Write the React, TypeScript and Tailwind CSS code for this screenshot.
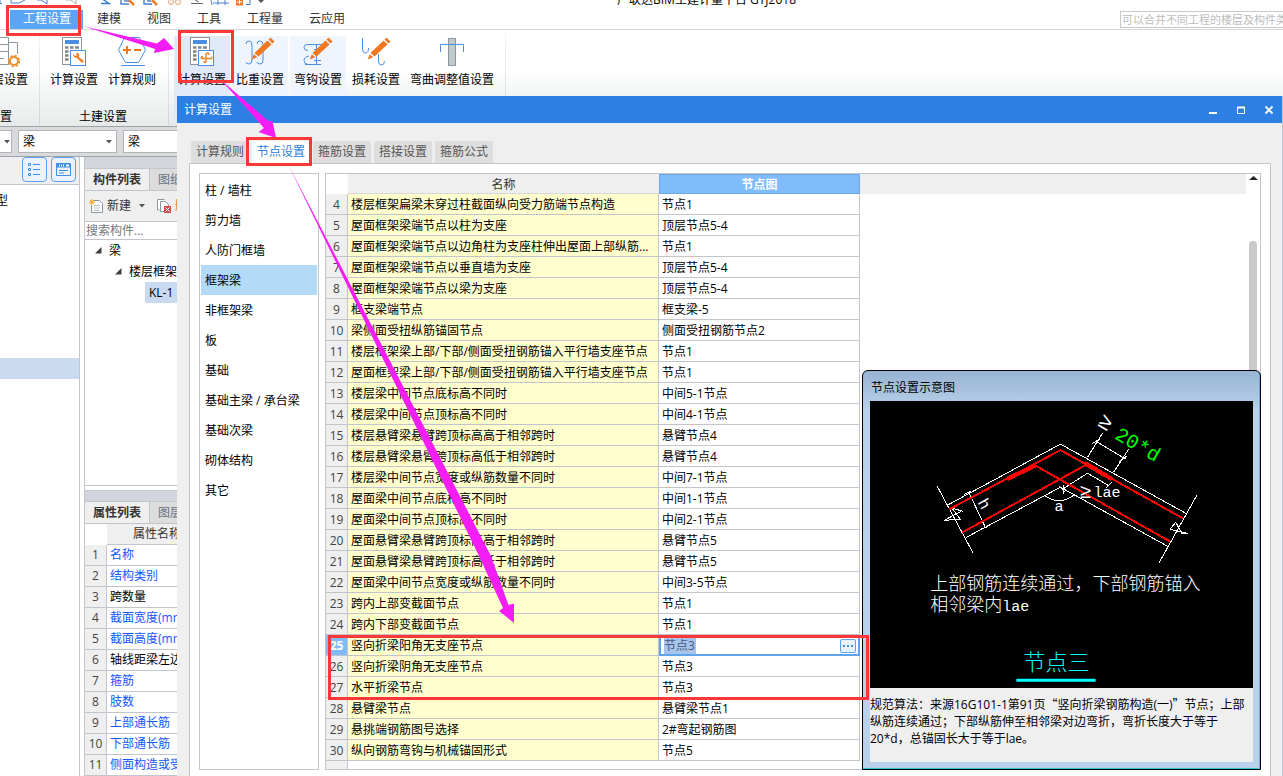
import React from "react";
import clsx from "clsx";

type NodeRow = { id: number; name: string; node: string };

const nodeRows: NodeRow[] = [
	{ id: 4, name: "楼层框架扁梁未穿过柱截面纵向受力筋端节点构造", node: "节点1" },
	{ id: 5, name: "屋面框架梁端节点以柱为支座", node: "顶层节点5-4" },
	{ id: 6, name: "屋面框架梁端节点以边角柱为支座柱伸出屋面上部纵筋...", node: "节点1" },
	{ id: 7, name: "屋面框架梁端节点以垂直墙为支座", node: "顶层节点5-4" },
	{ id: 8, name: "屋面框架梁端节点以梁为支座", node: "顶层节点5-4" },
	{ id: 9, name: "框支梁端节点", node: "框支梁-5" },
	{ id: 10, name: "梁侧面受扭纵筋锚固节点", node: "侧面受扭钢筋节点2" },
	{ id: 11, name: "楼层框架梁上部/下部/侧面受扭钢筋锚入平行墙支座节点", node: "节点1" },
	{ id: 12, name: "屋面框架梁上部/下部/侧面受扭钢筋锚入平行墙支座节点", node: "节点1" },
	{ id: 13, name: "楼层梁中间节点底标高不同时", node: "中间5-1节点" },
	{ id: 14, name: "楼层梁中间节点顶标高不同时", node: "中间4-1节点" },
	{ id: 15, name: "楼层悬臂梁悬臂跨顶标高高于相邻跨时", node: "悬臂节点4" },
	{ id: 16, name: "楼层悬臂梁悬臂跨顶标高低于相邻跨时", node: "悬臂节点4" },
	{ id: 17, name: "楼层梁中间节点宽度或纵筋数量不同时", node: "中间7-1节点" },
	{ id: 18, name: "屋面梁中间节点底标高不同时", node: "中间1-1节点" },
	{ id: 19, name: "屋面梁中间节点顶标高不同时", node: "中间2-1节点" },
	{ id: 20, name: "屋面悬臂梁悬臂跨顶标高高于相邻跨时", node: "悬臂节点5" },
	{ id: 21, name: "屋面悬臂梁悬臂跨顶标高低于相邻跨时", node: "悬臂节点5" },
	{ id: 22, name: "屋面梁中间节点宽度或纵筋数量不同时", node: "中间3-5节点" },
	{ id: 23, name: "跨内上部变截面节点", node: "节点1" },
	{ id: 24, name: "跨内下部变截面节点", node: "节点1" },
	{ id: 25, name: "竖向折梁阳角无支座节点", node: "节点3" },
	{ id: 26, name: "竖向折梁阴角无支座节点", node: "节点3" },
	{ id: 27, name: "水平折梁节点", node: "节点3" },
	{ id: 28, name: "悬臂梁节点", node: "悬臂梁节点1" },
	{ id: 29, name: "悬挑端钢筋图号选择", node: "2#弯起钢筋图" },
	{ id: 30, name: "纵向钢筋弯钩与机械锚固形式", node: "节点5" },
];

const properties = [
	{ name: "名称", blue: true },
	{ name: "结构类别", blue: true },
	{ name: "跨数量", blue: false },
	{ name: "截面宽度(mm)", blue: true },
	{ name: "截面高度(mm)", blue: true },
	{ name: "轴线距梁左边", blue: false },
	{ name: "箍筋", blue: true },
	{ name: "肢数", blue: true },
	{ name: "上部通长筋", blue: true },
	{ name: "下部通长筋", blue: true },
	{ name: "侧面构造或受扭", blue: true },
];

const categories = ["柱 / 墙柱", "剪力墙", "人防门框墙", "框架梁", "非框架梁", "板", "基础", "基础主梁 / 承台梁", "基础次梁", "砌体结构", "其它"];
const menuTabs = ["建模", "视图", "工具", "工程量", "云应用"];
const dialogTabs = ["计算规则", "节点设置", "箍筋设置", "搭接设置", "箍筋公式"];

/* ---------- icons ---------- */

const Calculator = () => (
	<g fill="none">
		<rect x="4.5" y="1.5" width="19" height="27" fill="#fff" stroke="#8a9499" />
		<rect x="7" y="4" width="14" height="4" fill="#4a90e2" />
		<path d="M7 11.500h3.500M12 11.500h3.500M17 11.500h4M7 15.500h3.500M12 15.500h3.500M7 19.500h3.500M7 23.500h3.500" stroke="#7c868c" strokeWidth="2.500" />
		<rect x="12.500" y="14.500" width="15" height="15" fill="#fff" stroke="#4a90e2" />
	</g>
);

const CalcWrenchIcon = () => (
	<svg width="32" height="32" viewBox="0 0 32 32">
		<Calculator />
		<path d="M15 18c0 3 2 4 4 4l5 5 2-2-5-4c1-3-1-5-3-4l1 2-2 1z" fill="#f08228" />
	</svg>
);

const CalcBarIcon = () => (
	<svg width="32" height="32" viewBox="0 0 32 32">
		<Calculator />
		<path d="M20 26.500v-7.500q0-2 1.500-2 1.500 0 1.500 2M15 22.500h10q1 0 1-2M20 26.500q-2 0-2-1.500M15 22.500q0-2 2-2" fill="none" stroke="#f08228" strokeWidth="1.400" />
	</svg>
);

const RuleIcon = () => (
	<svg width="32" height="32" viewBox="0 0 32 32" fill="none">
		<path d="M8.500 1.500h15L29.500 14l-7 12.500h-13L2.500 14z" fill="#fff" stroke="#4a90e2" />
		<path d="M7 14h8M11 10v8M18 14h7" stroke="#f07820" strokeWidth="2" />
		<path d="M5 29.500h24" stroke="#4a90e2" />
	</svg>
);

const Pencil = () => (
	<g>
		<path d="M26.500 1.500l4 4-2 2-4-4z" fill="#f07820" />
		<path d="M23.500 4.500l4 4-13 12-4-3.500z" fill="#f07820" />
		<path d="M9.800 18.200l3.500 3-5.800 2.300z" fill="#f07820" />
	</g>
);

const WeightIcon = () => (
	<svg width="32" height="32" viewBox="0 0 32 32" fill="none">
		<path d="M2 8q0-3 3-3t3 4v15q0 4-3 4t-3-2M13 8q0-3 3-3t3 4v15q0 4-3 4t-3-2" stroke="#4a90e2" />
		<Pencil />
	</svg>
);

const HookIcon = () => (
	<svg width="32" height="32" viewBox="0 0 32 32" fill="none">
		<path d="M20 8.500H5q-3 0-3 3t4 3M3 28.500h16M7 20q-5 1-5 4.500t4 4M14.500 8v20M12 24.500h7M12 13.500h5" stroke="#4a90e2" />
		<Pencil />
	</svg>
);

const LossIcon = () => (
	<svg width="32" height="32" viewBox="0 0 32 32" fill="none">
		<path d="M2.500 2v11q0 4 3 4t3-5M18.500 18v7q0 4 3 4t3-4" stroke="#4a90e2" />
		<Pencil />
	</svg>
);

const BendIcon = () => (
	<svg width="32" height="32" viewBox="0 0 32 32" fill="none">
		<rect x="12.500" y="2.500" width="7" height="27" fill="#c0c8cb" stroke="#8a989e" />
		<path d="M4.500 16V8.500h23V16" stroke="#4a90e2" />
	</svg>
);

const FloorIcon = () => (
	<svg width="32" height="32" viewBox="0 0 32 32" fill="none">
		<path d="M2 1.500h18.500v27H2M2 8.500h18M2 15.500h18M2 22.500h14M20 6.500h9.500V18" stroke="#8a989e" />
		<circle cx="26" cy="25" r="4" fill="#fff" stroke="#ee8f30" strokeWidth="2" />
		<circle cx="26" cy="25" r="5.500" stroke="#ee8f30" strokeWidth="1.500" strokeDasharray="2.300 2" />
	</svg>
);

const Caret = ({ className }: { className?: string }) => (
	<svg width="6" height="4" viewBox="0 0 6 4" className={clsx("shrink-0", className)}>
		<path d="M0 0h6L3 3.500z" fill="#555" />
	</svg>
);

const TreeArrow = () => (
	<svg width="7" height="7" viewBox="0 0 7 7" className="shrink-0">
		<path d="M6.500 0v6.500H0z" fill="#404040" />
	</svg>
);

/* Lower halves of the quick access icons, cut by the window edge */
const QuickIcons = () => (
	<svg width="270" height="8" viewBox="0 0 270 8" fill="none" className="shrink-0" aria-hidden="true">
		<path d="M0 0v3.500h2M11 0v3h8l6-3M37 0h4l6 4V0M211 0l1 5M213 3h16M218 0v5M225 0v5" stroke="#4a80c8" />
		<path d="M66 0h5l5 4V0" stroke="#b0b0b0" />
		<path d="M101 3.500h8l-6-4" stroke="#3c7cd0" strokeWidth="1.500" />
		<path d="M121 0v4h8M124 1h5M144 0v4h8M147 1h4" stroke="#4a80c8" strokeWidth="1.400" />
		<path d="M129 0l5 5M152 0l5 5" stroke="#ee7d28" strokeWidth="2.500" />
		<circle cx="171" cy="2" r="2.500" stroke="#ee9b70" />
		<circle cx="178" cy="2" r="2.500" stroke="#ee9b70" />
		<path d="M191 3.500h12M195 0l4 2" stroke="#666" />
		<path d="M236 0h7v5.500h-7z" fill="#ee7d28" />
		<path d="M237 2h5M239.500 0v4" stroke="#fff" />
		<path d="M246 4.500h4V0" stroke="#3c7cd0" />
		<path d="M258 0h6l-3 3z" fill="#555" />
	</svg>
);

/* ---------- main window ---------- */

const RibbonButton: React.FC<{ label: string; icon: React.ReactNode; className?: string }> = ({ label, icon, className }) => (
	<button type="button" className={clsx("flex flex-col items-center gap-1 px-1 text-black whitespace-nowrap", className)}>
		{icon}
		<span className="leading-4">{label}</span>
	</button>
);

const Divider = () => <div className="w-px self-stretch bg-linear-to-b from-gray-100 to-gray-300" />;

const Ribbon = () => (
	<div className="flex h-[97px] shrink-0 border-b border-[#a0a4a8] bg-linear-to-b from-white from-40% to-[#e6ebea] pt-[3px] pb-px">
		<div className="flex w-[39px] flex-col items-end justify-between overflow-hidden pt-[3px] pr-[7px]">
			<RibbonButton label="楼层设置" icon={<FloorIcon />} />
			<span className="-ml-2.5 w-full leading-4">置</span>
		</div>
		<Divider />
		<div className="flex flex-col items-center justify-between pt-[3px] pr-2 pl-1.5">
			<div className="flex gap-0.5">
				<RibbonButton label="计算设置" icon={<CalcWrenchIcon />} />
				<RibbonButton label="计算规则" icon={<RuleIcon />} />
			</div>
			<span className="leading-4">土建设置</span>
		</div>
		<Divider />
		<div className="flex gap-0.5 pt-[3px] pr-[7px] pl-[5px]">
			<RibbonButton label="计算设置" icon={<CalcBarIcon />} className="bg-[#dfe9f8]" />
			<RibbonButton label="比重设置" icon={<WeightIcon />} className="bg-[#f0f5fd]" />
			<RibbonButton label="弯钩设置" icon={<HookIcon />} className="bg-[#f0f5fd]" />
			<RibbonButton label="损耗设置" icon={<LossIcon />} />
			<RibbonButton label="弯曲调整值设置" icon={<BendIcon />} />
		</div>
		<Divider />
	</div>
);

const Combo: React.FC<{ label: string; value: string; className?: string }> = ({ label, value, className }) => (
	<div className={clsx("flex h-[23px] items-center border border-[#b4b4b4] bg-white pr-1", className)}>
		<select aria-label={label} className="h-full min-w-0 flex-1 appearance-none bg-transparent pl-1 outline-none">
			<option>{value}</option>
		</select>
		<Caret />
	</div>
);

const PanelTabs: React.FC<{ active: string; other: string }> = ({ active, other }) => (
	<div className="flex h-[22px] shrink-0 border-b border-[#c3c5cc] bg-[#dcdcdc] leading-[22px] whitespace-nowrap">
		<button type="button" className="border-r border-[#c3c5cc] bg-[#efefef] px-2 font-bold text-[#333]">{active}</button>
		<button type="button" className="px-2 text-gray-500">{other}</button>
	</div>
);

const MainWindow = () => (
	<div className="flex h-full flex-col">
		<div className="flex h-[9px] shrink-0 items-start overflow-hidden">
			<QuickIcons />
			<div className="-mt-2 flex-1 pl-[347px] leading-4 text-black">广联达BIM土建计量平台 GTJ2018</div>
		</div>
		<div className="flex h-[21px] shrink-0 items-center border-b border-[#d8d8d8] pl-[10px]">
			<button type="button" className="h-[19px] bg-[#5aa5f5] px-3 pl-[13px] text-white">工程设置</button>
			<div className="flex flex-1 gap-[26px] pl-[14px]">
				{menuTabs.map((tab) => (
					<button type="button" key={tab} className="text-[#333]">{tab}</button>
				))}
			</div>
			<input
				aria-label="搜索"
				placeholder="可以合并不同工程的楼层及构件类型"
				className="h-[17px] w-[163px] border border-r-0 border-[#c8c8c8] pl-px text-[11px] outline-none placeholder:text-[#bdbdbd]"
			/>
		</div>
		<Ribbon />
		<div className="flex h-[30px] shrink-0 items-center gap-1.5 border-b border-[#a0a4a8] bg-[#d8dade]">
			<Combo label="楼层" value="" className="w-3 border-l-0" />
			<Combo label="构件类别" value="梁" className="w-[99px]" />
			<Combo label="构件类型" value="梁" className="w-[99px]" />
		</div>
		<div className="flex min-h-0 flex-1 gap-1">
			<aside className="flex w-20 shrink-0 flex-col border-r border-[#c3c5cc]">
				<div className="flex h-7 shrink-0 items-center justify-end gap-1 border-b border-[#c3c5cc] bg-[#efefef] pr-[3px] pb-0.5">
					<button type="button" aria-label="列表" className="flex size-[25px] items-center justify-center rounded-sm border border-[#5aa0ee] bg-[#eaf3fd]">
						<svg width="15" height="15" viewBox="0 0 15 15" fill="none" stroke="#3f8fe8">
							<path d="M1.500 1.500h2v2h-2zM1.500 6.500h2v2h-2zM1.500 11.500h2v2h-2zM6 2.500h7M6 7.500h7M6 12.500h7" />
						</svg>
					</button>
					<button type="button" aria-label="面板" className="flex size-[25px] items-center justify-center rounded-sm border border-[#5aa0ee] bg-[#eaf3fd]">
						<svg width="15" height="15" viewBox="0 0 15 15" fill="none" stroke="#3f8fe8">
							<path d="M.5 1.500h14v12H.5zM3 8.500h9M3 11h5" />
							<path d="M1 3.500h13" strokeWidth="4" />
							<path d="M3 3.500h1M5 3.500h1M7 3.500h1M10 3.500h3" stroke="#fff" strokeWidth="2" />
						</svg>
					</button>
				</div>
				<div className="flex-1 overflow-hidden">
					<div className="mt-[5px] -ml-1 h-[21px] leading-[21px]">型</div>
					<div className="mt-[147px] h-[21px] bg-[#c9d9f0]" />
				</div>
			</aside>
			<div className="flex flex-1 flex-col border-l border-[#c3c5cc]">
				<div className="h-3 shrink-0 border-b border-[#c3c5cc] bg-[#d3d5dc]" />
				<PanelTabs active="构件列表" other="图纸管理" />
				<div className="flex h-[31px] shrink-0 items-center border-b border-[#c3c5cc] bg-[#efefef] pl-1 text-[#333]">
					<button type="button" className="flex items-center gap-[3px]">
						<svg width="15" height="15" viewBox="0 0 15 15" fill="none">
							<path d="M4.500 1.500h6l3 3v9h-11V6" fill="#fff" stroke="#8a989e" />
							<path d="M5 6.500h6M5 9h6M5 11.500h6" stroke="#b5bdc2" />
							<path d="M3 0v6M0 3h6M1 1l4 4M5 1L1 5" stroke="#f5a623" />
						</svg>
						新建
					</button>
					<Caret className="ml-2" />
					<button type="button" className="ml-3 flex items-center gap-[3px]">
						<svg width="15" height="15" viewBox="0 0 15 15" fill="none">
							<path d="M2.500 11H.5V.5h7M3.500 2.500h5l3 3v7h-8z" fill="#fff" stroke="#8a989e" />
							<rect x="7" y="7" width="7" height="7" fill="#d84848" />
							<path d="M8.500 8.500l4 4M12.500 8.500l-4 4" stroke="#fff" />
						</svg>
						<span className="text-amber-600">删除</span>
					</button>
				</div>
				<input aria-label="搜索构件" placeholder="搜索构件..." className="h-[18px] shrink-0 border-b border-[#c3c5cc] pl-px outline-none placeholder:text-[#777]" />
				<ul className="h-[246px] shrink-0 border-b border-[#c3c5cc] leading-[21px]">
					<li className="flex items-center gap-[7px] pl-[10px]"><TreeArrow />梁</li>
					<li className="flex items-center gap-[7px] pl-[30px]"><TreeArrow />楼层框架梁</li>
					<li className="ml-[60px] bg-[#c9d9f0] pl-1">KL-1</li>
				</ul>
				<div className="mt-1 h-3 shrink-0 border-y border-[#c3c5cc] bg-[#d3d5dc]" />
				<PanelTabs active="属性列表" other="图层管理" />
				<table className="w-[260px] shrink-0 table-fixed border-separate border-spacing-0">
					<colgroup>
						<col className="w-[22px]" />
						<col />
					</colgroup>
					<thead>
						<tr className="h-[21px] text-[#333]">
							<th />
							<th className="border-b border-[#c3c5cc] bg-[#efefef] pl-[26px] text-left font-normal">属性名称</th>
						</tr>
					</thead>
					<tbody>
						{properties.map((p, i) => (
							<tr key={p.name} className="h-[21px]">
								<td className="border-r border-b border-[#c3c5cc] bg-[#efefef] p-0 text-center text-[#444]">{i + 1}</td>
								<td className={clsx("border-b border-[#c3c5cc] py-0 pr-0 pl-[3px] whitespace-nowrap", p.blue ? "text-[#1455ff]" : "text-black")}>{p.name}</td>
							</tr>
						))}
					</tbody>
				</table>
			</div>
		</div>
	</div>
);

/* ---------- settings dialog ---------- */

const NodeTable = () => (
	<table className="w-full table-fixed border-separate border-spacing-0">
		<colgroup>
			<col className="w-[22px]" />
			<col className="w-[311px]" />
			<col className="w-[201px]" />
			<col />
		</colgroup>
		<thead>
			<tr className="h-5 leading-[17px]">
				<th className="p-0" />
				<th className="border-b border-[#d8d8dc] bg-[#efefef] p-0 pt-0.5 font-normal text-[#333]">名称</th>
				<th className="border border-[#6aa8e8] bg-[#80bbfb] p-0 pt-px font-bold text-white">节点图</th>
				<th className="bg-[#efefef] p-0" />
			</tr>
		</thead>
		<tbody>
			{nodeRows.map((row) => {
				const selected = row.id === 25;
				return (
					<tr key={row.id} className="h-[21px]">
						<td className={clsx("border-r border-b border-[#c3c5cc] p-0 pt-0.5 text-center", selected ? "bg-[#80bbfb] font-bold text-white" : "bg-[#efefef] text-[#444]")}>{row.id}</td>
						<td className="truncate border-r border-b border-[#c3c5cc] bg-[#ffffce] pt-0.5 pr-1 pb-0 pl-[3px] text-black">{row.name}</td>
						{selected ? (
							<td className="border-2 border-[#62a4ea] bg-white p-0">
								<div className="flex h-[17px] items-center justify-between pr-0.5 pl-[3px]">
									<input aria-label="节点图" defaultValue={row.node} size={4} className="h-4 w-8 bg-[#a5c4ee] text-[#4a5a78] outline-none" />
									<button type="button" aria-label="选择节点" className="flex h-[14px] w-4 items-center justify-center gap-0.5 rounded-xs border border-[#62a4ea] bg-[#eaf3fd]">
										<i className="size-0.5 bg-[#4a90e2]" />
										<i className="size-0.5 bg-[#4a90e2]" />
										<i className="size-0.5 bg-[#4a90e2]" />
									</button>
								</div>
							</td>
						) : (
							<td className="border-r border-b border-[#c3c5cc] pt-0.5 pr-0 pb-0 pl-[3px] text-black">{row.node}</td>
						)}
						<td className="p-0" />
					</tr>
				);
			})}
		</tbody>
	</table>
);

const NodeDiagram = () => (
	<svg viewBox="0 0 382 286" className="block w-full bg-black font-['Liberation_Mono','Noto_Sans_CJK_SC',monospace]" fill="none">
		<g stroke="#fff" shapeRendering="crispEdges">
			<path d="M77 104L190 43L315 112M96 136L190 86L297 145" />
			<path d="M67 85L103 152M91 110L74 119L90 118L82 107L93 110" />
			<path d="M326 94L288 162M299 128L305 121L311 132L317 132L299 128" />
			<path d="M99 92L115 126M94 93L101 90M110 128L118 125" />
			<path d="M192 88L217 72L239 85M189 85L195 91M193 84V93M235 87L241 81" />
			<path d="M232 32L217 56M258 48L243 71M225 40L255 58M221 43L229 38M248 61L256 55" />
			<path d="M174 94Q189 105 203 94" />
		</g>
		<g stroke="#f00" strokeWidth="2" shapeRendering="crispEdges">
			<path d="M79 108L190 49L312 117" />
			<path d="M92 131L215 64L241 79M215 61L242 77" />
			<path d="M299 140L166 65L137 79M164 64L137 76" />
		</g>
		<g fill="#fff" fontSize="15">
			<text x="209" y="97" fontSize="20">≥</text>
			<text x="223" y="96">lae</text>
			<text x="184" y="110">a</text>
			<text transform="translate(107 101) rotate(60)" fontSize="16">h</text>
			<text transform="translate(226 24) rotate(30)" fontSize="22">≥</text>
		</g>
		<text transform="translate(243 37) rotate(30)" fontSize="20" fill="#0f0">20*d</text>
		<g fill="#fff" fontSize="18" fontWeight="300">
			<text x="60" y="189">上部钢筋连续通过，下部钢筋锚入</text>
			<text x="60" y="209">相邻梁内</text>
			<text x="132" y="209" fontSize="15">lae</text>
		</g>
		<text x="153" y="268" fontSize="22" fontWeight="300" fill="#0ff">节点三</text>
		<path d="M146 278.500h79" stroke="#0ff" strokeWidth="3" />
	</svg>
);

const PreviewWindow = () => (
	<section className="absolute right-[21px] bottom-[6px] flex h-[400px] w-[399px] flex-col rounded-t-md border border-black bg-[#b9d1ea] bg-linear-to-b from-[#98b4d3] to-[#b9d1ea] to-10% px-[7px] pb-[7px] shadow-[inset_-1px_-1px_0_#35c4dc]">
		<h2 className="h-[30px] shrink-0 pt-[9px] pl-px leading-4 text-black">节点设置示意图</h2>
		<div className="flex flex-1 flex-col bg-[#efefef]">
			<NodeDiagram />
			<p className="pt-[7px] leading-[17px] text-black">
				规范算法：来源16G101-1第91页
				<span className="font-['Noto_Sans_CJK_SC',sans-serif]">“</span>竖向折梁钢筋构造(一)<span className="font-['Noto_Sans_CJK_SC',sans-serif]">”</span>
				节点；上部纵筋连续通过；下部纵筋伸至相邻梁对边弯折，弯折长度大于等于20*d，总锚固长大于等于lae。
			</p>
		</div>
	</section>
);

const SettingsDialog = () => (
	<section className="absolute top-24 right-0 bottom-0 left-[177px] flex flex-col border-r border-[#b8c4d8] bg-[#efefef]">
		<header className="flex h-[27px] shrink-0 items-center justify-between bg-[#2d7fe1] px-[7px] text-white">
			<h1>计算设置</h1>
			<div className="flex gap-4">
				<button type="button" aria-label="最小化" className="w-3">
					<svg width="12" height="10" viewBox="0 0 12 10"><path d="M2 8h8" stroke="#fff" strokeWidth="2" /></svg>
				</button>
				<button type="button" aria-label="最大化" className="w-3">
					<svg width="12" height="10" viewBox="0 0 12 10" fill="none"><path d="M2.500 2v6.500h7V2" stroke="#fff" /><path d="M2 2.500h8" stroke="#fff" strokeWidth="2" /></svg>
				</button>
				<button type="button" aria-label="关闭" className="w-3">
					<svg width="12" height="10" viewBox="0 0 12 10"><path d="M2.500 1.500l7 7M9.500 1.500l-7 7" stroke="#fff" strokeWidth="1.800" /></svg>
				</button>
			</div>
		</header>
		<nav className="flex h-10 shrink-0 items-end gap-[3px] pl-[14px]">
			{dialogTabs.map((tab) => (
				<button
					type="button"
					key={tab}
					className={clsx("h-[22px] w-[58px] rounded-t-xs text-center", tab === "节点设置" ? "bg-white text-[#2d7fe1]" : "bg-[#dedede] text-[#555]")}
				>
					{tab}
				</button>
			))}
		</nav>
		<div className="mr-[11px] ml-3 flex min-h-0 flex-1 gap-1.5 border border-b-0 border-[#c3c5cc] bg-white px-[9px] pt-[9px] pb-[6px]">
			<ul className="w-[120px] shrink-0 border border-[#c3c5cc] p-px">
				{categories.map((c) => (
					<li key={c}>
						<button type="button" className={clsx("h-[30px] w-full pt-px pl-1 text-left text-black", c === "框架梁" && "bg-[#b3daf6]")}>{c}</button>
					</li>
				))}
			</ul>
			<div className="flex min-w-0 flex-1 overflow-hidden border border-[#c3c5cc]">
				<div className="flex min-w-0 flex-1 flex-col">
					<NodeTable />
					<div className="w-[22px] flex-1 border-r border-[#c3c5cc] bg-[#efefef]" />
				</div>
				<div className="flex w-[14px] flex-col items-center pt-[2px]">
					<svg width="9" height="4" viewBox="0 0 9 4"><path d="M0 4h9L4.500 0z" fill="#222" /></svg>
					<div className="mt-[61px] h-[260px] w-2 rounded-full bg-[#c9c9c9]" />
				</div>
			</div>
		</div>
		<PreviewWindow />
	</section>
);

/* Red frames and magenta arrows drawn over the windows */
const Annotations = () => (
	<svg width="1283" height="776" viewBox="0 0 1283 776" className="pointer-events-none absolute top-0 left-0" fill="none" aria-hidden="true">
		<g fill="#f51df5">
			<path d="M83 26L157 43.500L164 38L174 49L154 53L155 49z" />
			<path d="M221 80L268.500 121H272.500L276 138L258.500 132L264 128z" />
			<path d="M289 166L491 556L508.500 605L514 603.500V623L499 611L503 608L479 556z" />
		</g>
		<g stroke="#fa3838" strokeWidth="3">
			<path d="M7.500 6.500h72v28h-72z" />
			<path d="M179.500 31.500h53v50h-53z" />
			<path d="M247.500 138.500h63v26h-63z" />
			<path d="M329.500 636.500h538v62h-538z" />
		</g>
	</svg>
);

export default function App() {
	return (
		<main className="relative h-screen overflow-hidden bg-white font-['Open_Sans','Noto_Sans_CJK_SC',sans-serif] text-[12px] text-black">
			<MainWindow />
			<SettingsDialog />
			<Annotations />
		</main>
	);
}
